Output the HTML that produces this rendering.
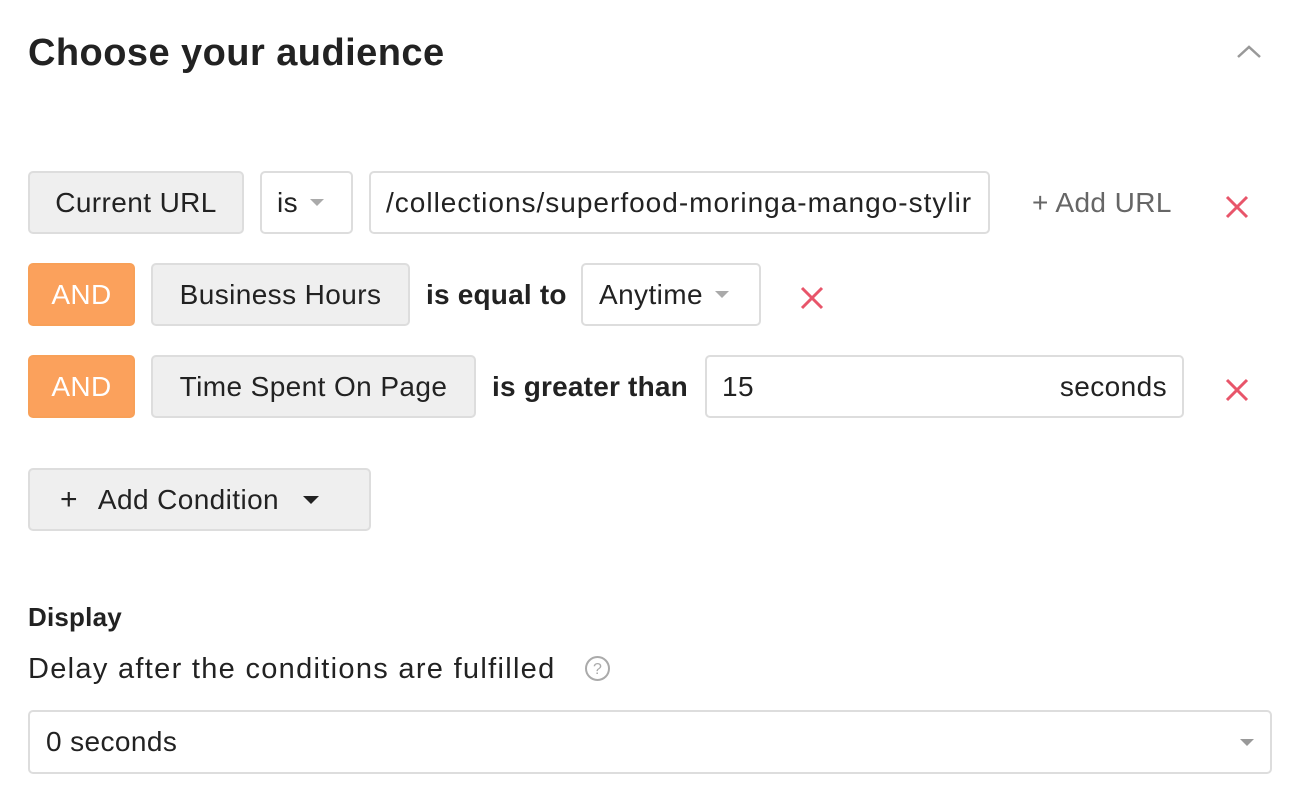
<!DOCTYPE html>
<html><head><meta charset="utf-8"><style>
*{box-sizing:border-box;margin:0;padding:0}
body{width:1304px;height:802px;background:#fff;font-family:"Liberation Sans",sans-serif;color:#222;position:relative;overflow:hidden}
.a{position:absolute;display:flex;align-items:center;white-space:nowrap;font-size:28px;letter-spacing:0.4px}
.g{background:#efefef;border:2px solid #ddd;border-radius:5px;justify-content:center}
.w{background:#fff;border:2px solid #ddd;border-radius:5px}
.o{background:#fba15c;border:2px solid #f8a058;border-radius:5px;color:#fff;justify-content:center}
.b{font-weight:bold;letter-spacing:0.2px}
.car{width:0;height:0;border-left:7px solid transparent;border-right:7px solid transparent;border-top:7px solid #aaa;display:inline-block}
.x{position:absolute}
</style></head><body>
<div class="a b" style="left:28px;top:28px;font-size:38px;height:50px;color:#222;letter-spacing:0.45px">Choose your audience</div>
<svg class="x" style="left:1236px;top:44px" width="26" height="16"><path d="M2 13 L13 3 L24 13" stroke="#999" stroke-width="2.5" fill="none"/></svg>

<div class="a g" style="left:28px;top:171px;width:216px;height:63px">Current URL</div>
<div class="a w" style="left:260px;top:171px;width:93px;height:63px;padding-left:15px">is<span class="car" style="margin-left:12px"></span></div>
<div class="a w" style="left:369px;top:171px;width:621px;height:63px;padding-left:15px;overflow:hidden;letter-spacing:1px;font-size:28px">/collections/superfood-moringa-mango-stylir</div>
<div class="a" style="left:1032px;top:171px;height:63px;color:#666">+ Add URL</div>
<svg class="x" style="left:1223px;top:193px" width="28" height="28"><path d="M4 4L24 24M24 4L4 24" stroke="#e8556a" stroke-width="3"/></svg>

<div class="a o" style="left:28px;top:263px;width:107px;height:63px">AND</div>
<div class="a g" style="left:151px;top:263px;width:259px;height:63px">Business Hours</div>
<div class="a b" style="left:426px;top:263px;height:63px">is equal to</div>
<div class="a w" style="left:581px;top:263px;width:180px;height:63px;padding-left:16px">Anytime<span class="car" style="margin-left:12px"></span></div>
<svg class="x" style="left:798px;top:284px" width="28" height="28"><path d="M4 4L24 24M24 4L4 24" stroke="#e8556a" stroke-width="3"/></svg>

<div class="a o" style="left:28px;top:355px;width:107px;height:63px">AND</div>
<div class="a g" style="left:151px;top:355px;width:325px;height:63px">Time Spent On Page</div>
<div class="a b" style="left:492px;top:355px;height:63px">is greater than</div>
<div class="a w" style="left:705px;top:355px;width:479px;height:63px;padding:0 15px;justify-content:space-between"><span>15</span><span>seconds</span></div>
<svg class="x" style="left:1223px;top:376px" width="28" height="28"><path d="M4 4L24 24M24 4L4 24" stroke="#e8556a" stroke-width="3"/></svg>

<div class="a g" style="left:28px;top:468px;width:343px;height:63px;justify-content:flex-start;padding-left:30px"><span style="font-size:30px;margin-right:20px">+</span>Add Condition<span class="car" style="margin-left:24px;border-top-color:#222;border-left-width:8px;border-right-width:8px;border-top-width:8px"></span></div>

<div class="a b" style="left:28px;top:600px;height:34px;font-size:26px">Display</div>
<div class="a" style="left:28px;top:652px;height:34px;font-size:29px;letter-spacing:1.3px">Delay after the conditions are fulfilled</div>
<svg class="x" style="left:584px;top:655px" width="27" height="27"><circle cx="13.5" cy="13.5" r="11.5" stroke="#aaa" stroke-width="2" fill="none"/><text x="13.5" y="19" text-anchor="middle" font-family="Liberation Sans" font-size="16" fill="#aaa">?</text></svg>
<div class="a w" style="left:28px;top:710px;width:1244px;height:64px;padding:0 16px;justify-content:space-between">0 seconds<span class="car" style="border-top-color:#999"></span></div>
</body></html>
